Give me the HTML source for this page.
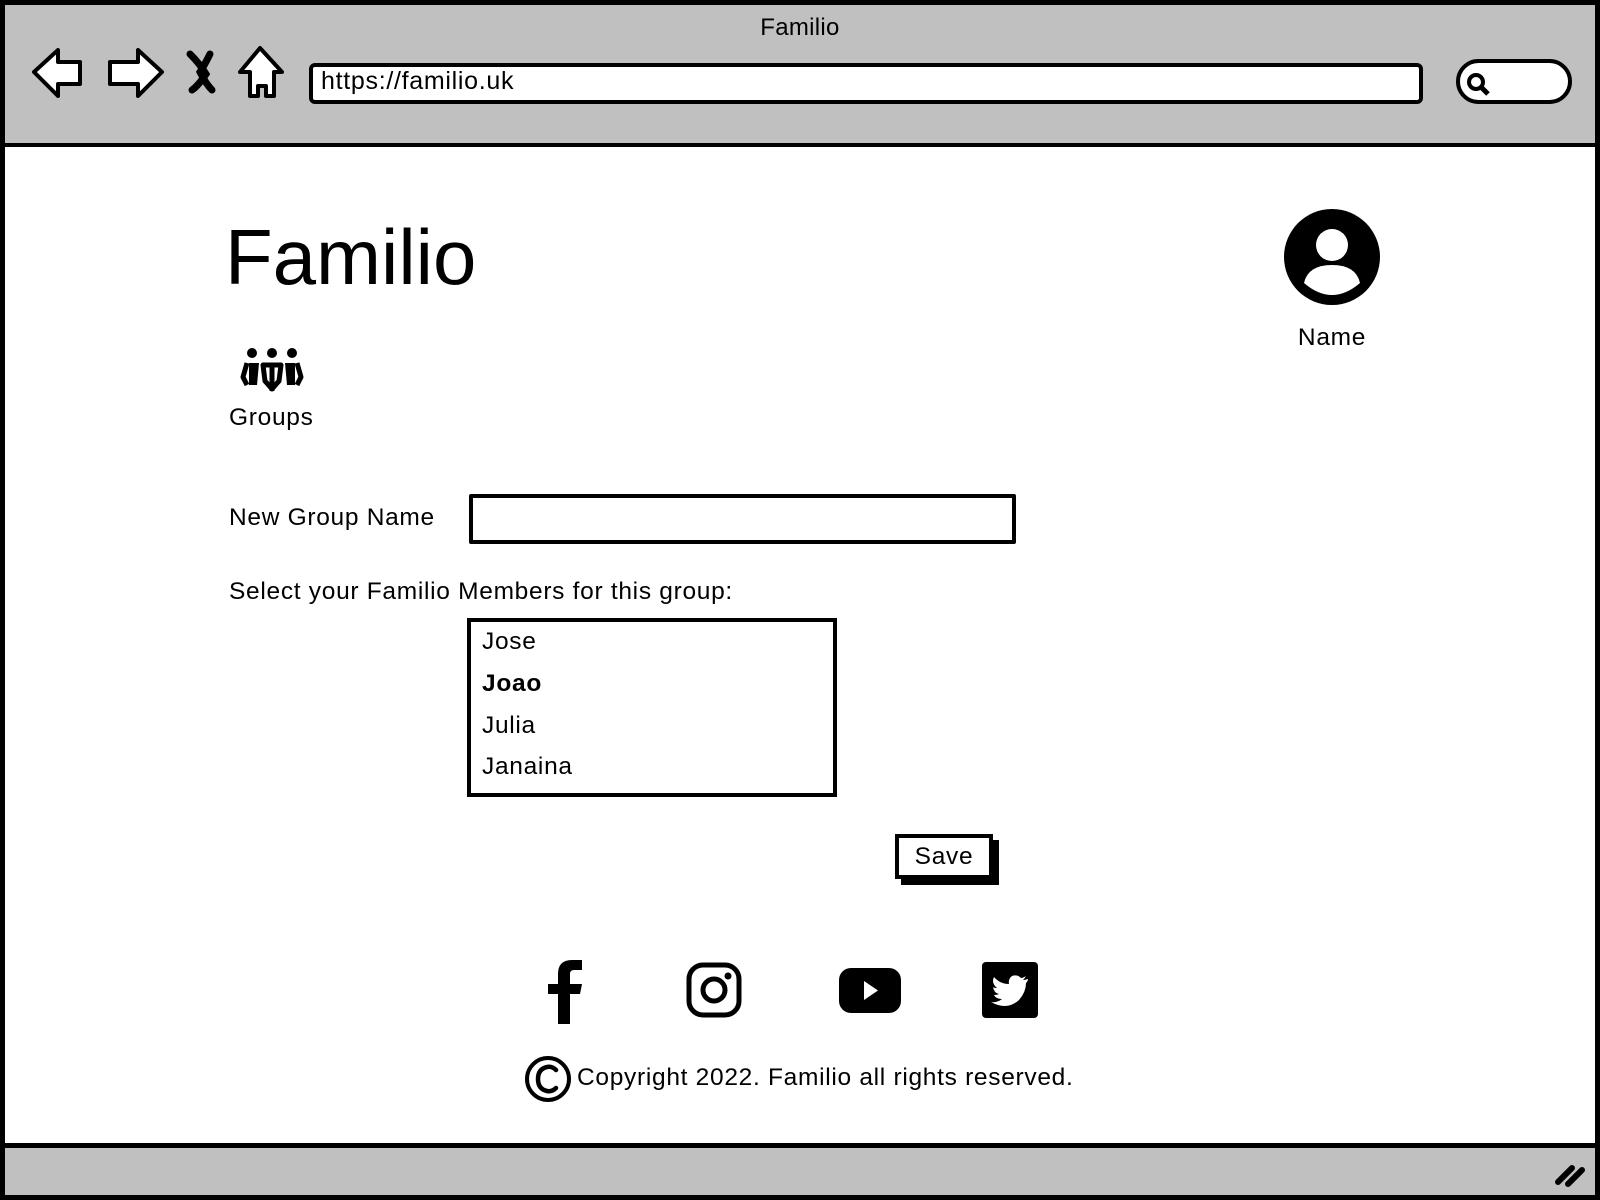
<!DOCTYPE html>
<html><head><meta charset="utf-8"><style>
*{margin:0;padding:0;box-sizing:border-box}
body{width:1600px;height:1200px;position:relative;background:#fff;font-family:"Liberation Sans",sans-serif;color:#000;overflow:hidden}
.a{position:absolute}
.t{position:absolute;white-space:nowrap;font-size:24.5px;letter-spacing:0.7px}
</style></head><body>
<div class="a" style="left:0;top:0;width:1600px;height:147px;background:#c0c0c0;border:5px solid #000;border-bottom:4px solid #000"></div>
<div class="a" style="left:0;top:143px;width:1600px;height:1057px;border:5px solid #000;border-top:none"></div>
<div class="a" style="left:0;top:1143px;width:1600px;height:57px;background:#c0c0c0;border:5px solid #000"></div>
<svg class="a" style="left:1550px;top:1160px" width="40" height="30"><path d="M8 22 L22 8 M18 24 L32 10" stroke="#000" stroke-width="6" stroke-linecap="round"/></svg>
<div class="t" style="left:0;width:1600px;text-align:center;top:14px;font-size:24px;letter-spacing:0.3px">Familio</div>
<svg class="a" style="left:28px;top:44px" width="260" height="60">
<path d="M6 28 L30 6 L30 18 L52 18 L52 40 L30 40 L30 52 Z" fill="#fff" stroke="#000" stroke-width="4" stroke-linejoin="round"/>
<path d="M134 28 L110 6 L110 18 L82 18 L82 40 L110 40 L110 52 Z" fill="#fff" stroke="#000" stroke-width="4" stroke-linejoin="round"/>
<path d="M162 10 Q172 20 178 30 Q170 42 164 46 M182 10 Q176 22 172 28 Q178 40 184 46" stroke="#000" stroke-width="7" fill="none" stroke-linecap="round"/>
<path d="M232 4 L254 28 L246 28 L246 52 L238 52 L238 42 L230 42 L230 52 L222 52 L222 28 L212 28 Z" fill="#fff" stroke="#000" stroke-width="4" stroke-linejoin="round"/>
</svg>
<div class="a" style="left:309px;top:63px;width:1114px;height:41px;background:#fff;border:4px solid #000;border-radius:6px"></div>
<div class="t" style="left:321px;top:67px;font-size:25px">https://familio.uk</div>
<div class="a" style="left:1456px;top:59px;width:116px;height:45px;background:#fff;border:4px solid #000;border-radius:23px"></div>
<svg class="a" style="left:1464px;top:70px" width="30" height="30"><circle cx="12" cy="12" r="7" fill="none" stroke="#000" stroke-width="4"/><path d="M17 17 L24 24" stroke="#000" stroke-width="5"/></svg>
<div class="t" style="left:225px;top:212px;font-size:78px;letter-spacing:0">Familio</div>
<svg class="a" style="left:1284px;top:209px" width="96" height="96"><circle cx="48" cy="48" r="48" fill="#000"/><circle cx="48" cy="36" r="16" fill="#fff"/><path d="M20 74 Q24 56 48 56 Q72 56 76 74 Q62 86 48 86 Q34 86 20 74Z" fill="#fff"/></svg>
<div class="t" style="left:1282px;top:324px;width:100px;text-align:center">Name</div>
<svg class="a" style="left:239px;top:347px" width="66" height="46">
<circle cx="13" cy="6" r="5"/><circle cx="33" cy="6" r="5"/><circle cx="53" cy="6" r="5"/>
<path d="M8 16 L4 30 L8 38 M58 16 L62 30 L58 38 M24 18 L42 18 L40 34 L33 42 L26 34Z M33 18 L33 44" stroke="#000" stroke-width="5" fill="none" stroke-linejoin="round"/>
<path d="M10 16 L20 16 L18 38 L10 38 Z M46 16 L56 16 L56 38 L48 38Z" fill="#000"/>
</svg>
<div class="t" style="left:229px;top:404px">Groups</div>
<div class="t" style="left:229px;top:504px">New Group Name</div>
<div class="a" style="left:469px;top:494px;width:547px;height:50px;border:4px solid #000;border-radius:2px"></div>
<div class="t" style="left:229px;top:578px">Select your Familio Members for this group:</div>
<div class="a" style="left:467px;top:618px;width:370px;height:179px;border:4px solid #000"></div>
<div class="t" style="left:482px;top:628px">Jose</div>
<div class="t" style="left:482px;top:670px;font-weight:bold">Joao</div>
<div class="t" style="left:482px;top:712px">Julia</div>
<div class="t" style="left:482px;top:753px">Janaina</div>
<div class="a" style="left:901px;top:840px;width:98px;height:45px;background:#000"></div>
<div class="a" style="left:895px;top:834px;width:98px;height:45px;background:#fff;border:4px solid #000"></div>
<div class="t" style="left:895px;top:843px;width:98px;text-align:center">Save</div>
<svg class="a" style="left:544px;top:958px" width="40" height="66"><path d="M14 66 L14 36 L4 36 L4 26 L14 26 L14 16 Q14 2 28 2 L38 2 L38 12 L30 12 Q26 12 26 16 L26 26 L38 26 L36 36 L26 36 L26 66Z"/></svg>
<svg class="a" style="left:686px;top:962px" width="56" height="56"><rect x="3" y="3" width="50" height="50" rx="14" fill="none" stroke="#000" stroke-width="5"/><circle cx="28" cy="28" r="11" fill="none" stroke="#000" stroke-width="5"/><circle cx="42" cy="14" r="3.5"/></svg>
<svg class="a" style="left:839px;top:968px" width="62" height="45"><rect x="0" y="0" width="62" height="45" rx="12"/><path d="M25 13 L39 22.5 L25 32Z" fill="#fff"/></svg>
<svg class="a" style="left:982px;top:962px" width="56" height="56"><rect width="56" height="56" rx="4"/><path d="M46 17 Q43 18 41 18 Q43 16 44 14 Q41 16 39 16 Q35 12 30 14 Q26 17 27 22 Q18 22 12 15 Q9 21 15 26 Q12 26 11 25 Q12 31 17 32 Q15 33 12 33 Q14 37 20 37 Q15 41 9 40 Q25 49 37 38 Q44 30 44 21 Q46 19 46 17Z" fill="#fff"/></svg>
<svg class="a" style="left:524px;top:1055px" width="48" height="48"><circle cx="24" cy="24" r="21" fill="none" stroke="#000" stroke-width="4"/><path d="M32 15 Q28 11 23 12 Q14 14 14 24 Q14 34 23 36 Q28 37 32 33" fill="none" stroke="#000" stroke-width="4.5" stroke-linecap="round"/></svg>
<div class="t" style="left:577px;top:1064px">Copyright 2022. Familio all rights reserved.</div>
</body></html>
